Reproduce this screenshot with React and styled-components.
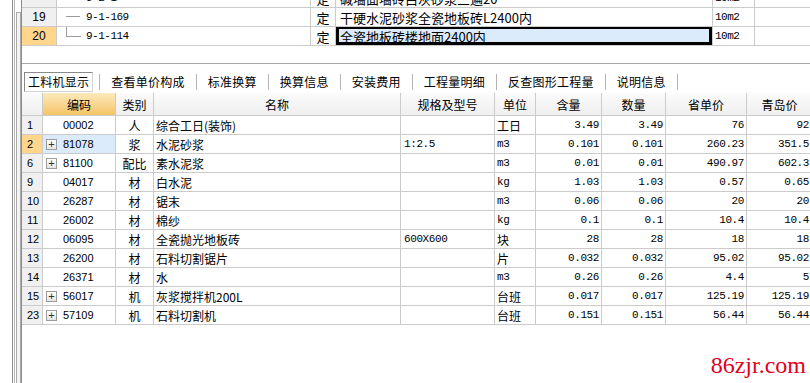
import React from 'react';
import styled, { createGlobalStyle } from 'styled-components';

const GlobalStyle = createGlobalStyle`
  html, body {
    margin: 0;
    padding: 0;
    background: #fff;
  }
  body {
    font-family: "Noto Sans CJK SC", sans-serif;
    font-size: 12px;
    color: #000;
  }
`;

const CJK = '"Noto Sans CJK SC", sans-serif';
const MONO = '"Liberation Mono", "Noto Sans CJK SC", monospace';
const SANS = '"Liberation Sans", "Noto Sans CJK SC", sans-serif';
const LINE = '#cbcbcb';

const Window = styled.div`
  position: relative;
  display: flex;
  width: 810px;
  height: 383px;
  overflow: hidden;
  background: #fff;
`;

const Gutter = styled.div`
  display: flex;
  width: 22px;
  flex-shrink: 0;
  padding-left: 12px;
  box-sizing: border-box;
`;

const Rail = styled.div`
  width: 1px;
  background: ${p => p.$c};
  margin-right: ${p => p.$gap || 0}px;
`;

const Slot = styled.div`
  width: 3px;
  margin-top: 12px;
  border: 1px solid #a9a9a9;
  border-bottom: none;
  background: #f3f3f3;
`;

const Main = styled.div`
  flex: 1;
  min-width: 0;
  display: flex;
  flex-direction: column;
  overflow: hidden;
`;

/* ---------- top pane (定额 list) ---------- */

const TopPane = styled.div`
  height: 64px;
  box-sizing: border-box;
  border-bottom: 1px solid #a7a7a7;
  overflow: hidden;
`;

const TopScroll = styled.div`
  margin-top: -11px;
`;

const TopRow = styled.div`
  display: flex;
  height: 18px;
  border-bottom: 1px solid ${LINE};
`;

const TopCell = styled.div`
  position: relative;
  width: ${p => p.$w}px;
  flex-shrink: 0;
  box-sizing: border-box;
  border-right: 1px solid ${LINE};
  display: flex;
  align-items: center;
  justify-content: ${p => (p.$center ? 'center' : 'flex-start')};
  padding-left: ${p => p.$pl || 0}px;
  white-space: nowrap;
  overflow: hidden;
  font-family: ${p => (p.$mono ? MONO : CJK)};
  font-size: ${p => (p.$mono ? '11px' : '13px')};
  letter-spacing: ${p => (p.$mono ? '-0.5px' : '0')};
  background: ${p => p.$bg || 'transparent'};
  box-shadow: ${p => (p.$focus ? 'inset 3px -3px 0 #000, inset -3px 2px 0 #000' : 'none')};
`;

const TopNum = styled(TopCell)`
  font-family: ${SANS};
  font-size: 12px;
  background: ${p => p.$bg || '#f0f0f0'};
`;

const Branch = styled.span`
  position: absolute;
  left: 9px;
  top: ${p => (p.$last ? '0' : '8px')};
  width: 14px;
  height: ${p => (p.$last ? '9px' : '0')};
  border-left: ${p => (p.$last ? '1px solid #9a9a9a' : 'none')};
  border-bottom: 1px solid #9a9a9a;
`;

const Code = styled.span`
  margin-left: 29px;
`;

const Filler = styled.div`
  flex: 1;
`;

/* ---------- tabs ---------- */

const TabBar = styled.div`
  display: flex;
  align-items: center;
  height: 20px;
  padding: 8px 0 1px 2px;
`;

const Tab = styled.div`
  height: 20px;
  box-sizing: border-box;
  line-height: 18px;
  padding: ${p => (p.$active ? '0 3px' : '0 10px')};
  margin-right: ${p => (p.$active ? '6px' : '0')};
  border: 1px solid ${p => (p.$active ? '#8a8a8a' : 'transparent')};
  border-right-color: ${p => (p.$active ? '#d4d4d4' : 'transparent')};
  border-bottom-color: ${p => (p.$active ? '#d4d4d4' : 'transparent')};
  font-family: ${CJK};
  font-size: 12px;
  letter-spacing: 0.25px;
  white-space: nowrap;
`;

const TabSep = styled.div`
  width: 1px;
  height: 16px;
  background: #b4b4b4;
`;

/* ---------- grid ---------- */

const Grid = styled.div`
  display: flex;
  flex-direction: column;
`;

const HeadRow = styled.div`
  display: flex;
  height: 23px;
  box-sizing: border-box;
  border-bottom: 1px solid ${LINE};
  background: linear-gradient(#fbfbfb, #efefef);
`;

const HeadCell = styled.div`
  width: ${p => p.$w}px;
  flex-shrink: 0;
  box-sizing: border-box;
  border-right: 1px solid ${LINE};
  display: flex;
  align-items: center;
  justify-content: center;
  font-family: ${CJK};
  font-size: 12px;
  background: ${p => (p.$hot ? 'linear-gradient(#fde9bd, #f4c466)' : 'transparent')};
`;

const Row = styled.div`
  display: flex;
  height: 19px;
  box-sizing: border-box;
  border-bottom: 1px solid ${LINE};
`;

const Cell = styled.div`
  position: relative;
  width: ${p => p.$w}px;
  flex-shrink: 0;
  box-sizing: border-box;
  border-right: 1px solid ${LINE};
  display: flex;
  align-items: center;
  justify-content: ${p => p.$align || 'flex-start'};
  padding: 0 ${p => p.$pr || 2}px 0 ${p => p.$pl || 2}px;
  white-space: nowrap;
  overflow: hidden;
  font-family: ${p => (p.$font === 'mono' ? MONO : p.$font === 'sans' ? SANS : CJK)};
  font-size: ${p => (p.$font === 'mono' || p.$font === 'sans' ? '11px' : '12px')};
  letter-spacing: ${p => (p.$font === 'mono' ? '-0.4px' : '0')};
  background: ${p => p.$bg || 'transparent'};
`;

const NumCell = styled(Cell)`
  background: ${p => p.$bg || '#f0f0f0'};
  padding-left: 5px;
`;

const Expander = styled.span`
  position: absolute;
  left: 3px;
  top: 4px;
  width: 9px;
  height: 9px;
  border: 1px solid #9c9c9c;
  background: linear-gradient(#ffffff, #e4e4e4);
  font-family: ${SANS};
  font-size: 11px;
  line-height: 9px;
  text-align: center;
  color: #333;
`;

const Watermark = styled.div`
  position: absolute;
  right: 4px;
  bottom: 4px;
  font-family: "Liberation Serif", serif;
  font-size: 24px;
  color: #e3001b;
`;

const topRows = [
  { num: '', code: '9-2-1', kind: '定', name: '碱墙面墙砖白灰砂浆三遍20', unit: '10m2' },
  { num: '19', code: '9-1-169', kind: '定', name: '干硬水泥砂浆全瓷地板砖L2400内', unit: '10m2' },
  { num: '20', code: '9-1-114', kind: '定', name: '全瓷地板砖楼地面2400内', unit: '10m2', current: true, last: true },
];

const tabs = ['工料机显示', '查看单价构成', '标准换算', '换算信息', '安装费用', '工程量明细', '反查图形工程量', '说明信息'];

const cols = [
  { key: 'num', title: '', w: 21 },
  { key: 'code', title: '编码', w: 73 },
  { key: 'cat', title: '类别', w: 38 },
  { key: 'name', title: '名称', w: 247 },
  { key: 'spec', title: '规格及型号', w: 94 },
  { key: 'unit', title: '单位', w: 41 },
  { key: 'qty', title: '含量', w: 66 },
  { key: 'amount', title: '数量', w: 64 },
  { key: 'price', title: '省单价', w: 81 },
  { key: 'local', title: '青岛价', w: 66 },
];

const items = [
  ['1', '00002', '人', '综合工日(装饰)', '', '工日', '3.49', '3.49', '76', '92'],
  ['2', '81078', '浆', '水泥砂浆', '1:2.5', 'm3', '0.101', '0.101', '260.23', '351.5', true],
  ['6', '81100', '配比', '素水泥浆', '', 'm3', '0.01', '0.01', '490.97', '602.3', true],
  ['9', '04017', '材', '白水泥', '', 'kg', '1.03', '1.03', '0.57', '0.65'],
  ['10', '26287', '材', '锯末', '', 'm3', '0.06', '0.06', '20', '20'],
  ['11', '26002', '材', '棉纱', '', 'kg', '0.1', '0.1', '10.4', '10.4'],
  ['12', '06095', '材', '全瓷抛光地板砖', '600X600', '块', '28', '28', '18', '18'],
  ['13', '26200', '材', '石料切割锯片', '', '片', '0.032', '0.032', '95.02', '95.02'],
  ['14', '26371', '材', '水', '', 'm3', '0.26', '0.26', '4.4', '5'],
  ['15', '56017', '机', '灰浆搅拌机200L', '', '台班', '0.017', '0.017', '125.19', '125.19', true],
  ['23', '57109', '机', '石料切割机', '', '台班', '0.151', '0.151', '56.44', '56.44', true],
];

const selectedRow = '2';

const isLatin = s => /^[\x00-\x7f]*$/.test(s);

const App = () => (
  <>
    <GlobalStyle />
    <Window>
      <Gutter>
        <Rail $c="#8c8c8c" $gap={1} />
        <Rail $c="#b8b8b8" $gap={1} />
        <Slot />
        <Rail $c="#8c8c8c" />
      </Gutter>

      <Main>
        <TopPane>
          <TopScroll>
            {topRows.map((r, i) => (
              <TopRow key={i}>
                <TopNum $w={35} $center $bg={r.current ? '#ffd68c' : undefined}>{r.num}</TopNum>
                <TopCell $w={254} $mono>
                  {i > 0 && <Branch $last={r.last} />}
                  <Code>{r.code}</Code>
                </TopCell>
                <TopCell $w={25} $center>{r.kind}</TopCell>
                <TopCell $w={377} $pl={4} $bg={r.current ? '#dcebfb' : undefined} $focus={r.current}>
                  {r.name}
                </TopCell>
                <TopCell $w={42} $mono $pl={2}>{r.unit}</TopCell>
                <Filler />
              </TopRow>
            ))}
          </TopScroll>
        </TopPane>

        <TabBar>
          {tabs.map((t, i) => (
            <React.Fragment key={t}>
              <Tab $active={i === 0}>{t}</Tab>
              <TabSep />
            </React.Fragment>
          ))}
        </TabBar>

        <Grid>
          <HeadRow>
            {cols.map(c => (
              <HeadCell key={c.key} $w={c.w} $hot={c.key === 'code'}>{c.title}</HeadCell>
            ))}
          </HeadRow>
          {items.map(it => {
            const [num, code, cat, name, spec, unit, qty, amount, price, local, expandable] = it;
            const sel = num === selectedRow;
            return (
              <Row key={num}>
                <NumCell $w={21} $font="sans" $bg={sel ? '#ffd68c' : undefined}>{num}</NumCell>
                <Cell $w={73} $font="sans" $pl={20} $bg={sel ? '#dcebfb' : undefined}>
                  {expandable && <Expander>+</Expander>}
                  {code}
                </Cell>
                <Cell $w={38} $align="center">{cat}</Cell>
                <Cell $w={247}>{name}</Cell>
                <Cell $w={94} $font="mono" $pl={3}>{spec}</Cell>
                <Cell $w={41} $font={isLatin(unit) ? 'mono' : 'cjk'}>{unit}</Cell>
                <Cell $w={66} $font="mono" $align="flex-end">{qty}</Cell>
                <Cell $w={64} $font="mono" $align="flex-end">{amount}</Cell>
                <Cell $w={81} $font="mono" $align="flex-end">{price}</Cell>
                <Cell $w={66} $font="mono" $align="flex-end" $pr={3}>{local}</Cell>
              </Row>
            );
          })}
        </Grid>
      </Main>

      <Watermark>86zjr.com</Watermark>
    </Window>
  </>
);

export default App;
